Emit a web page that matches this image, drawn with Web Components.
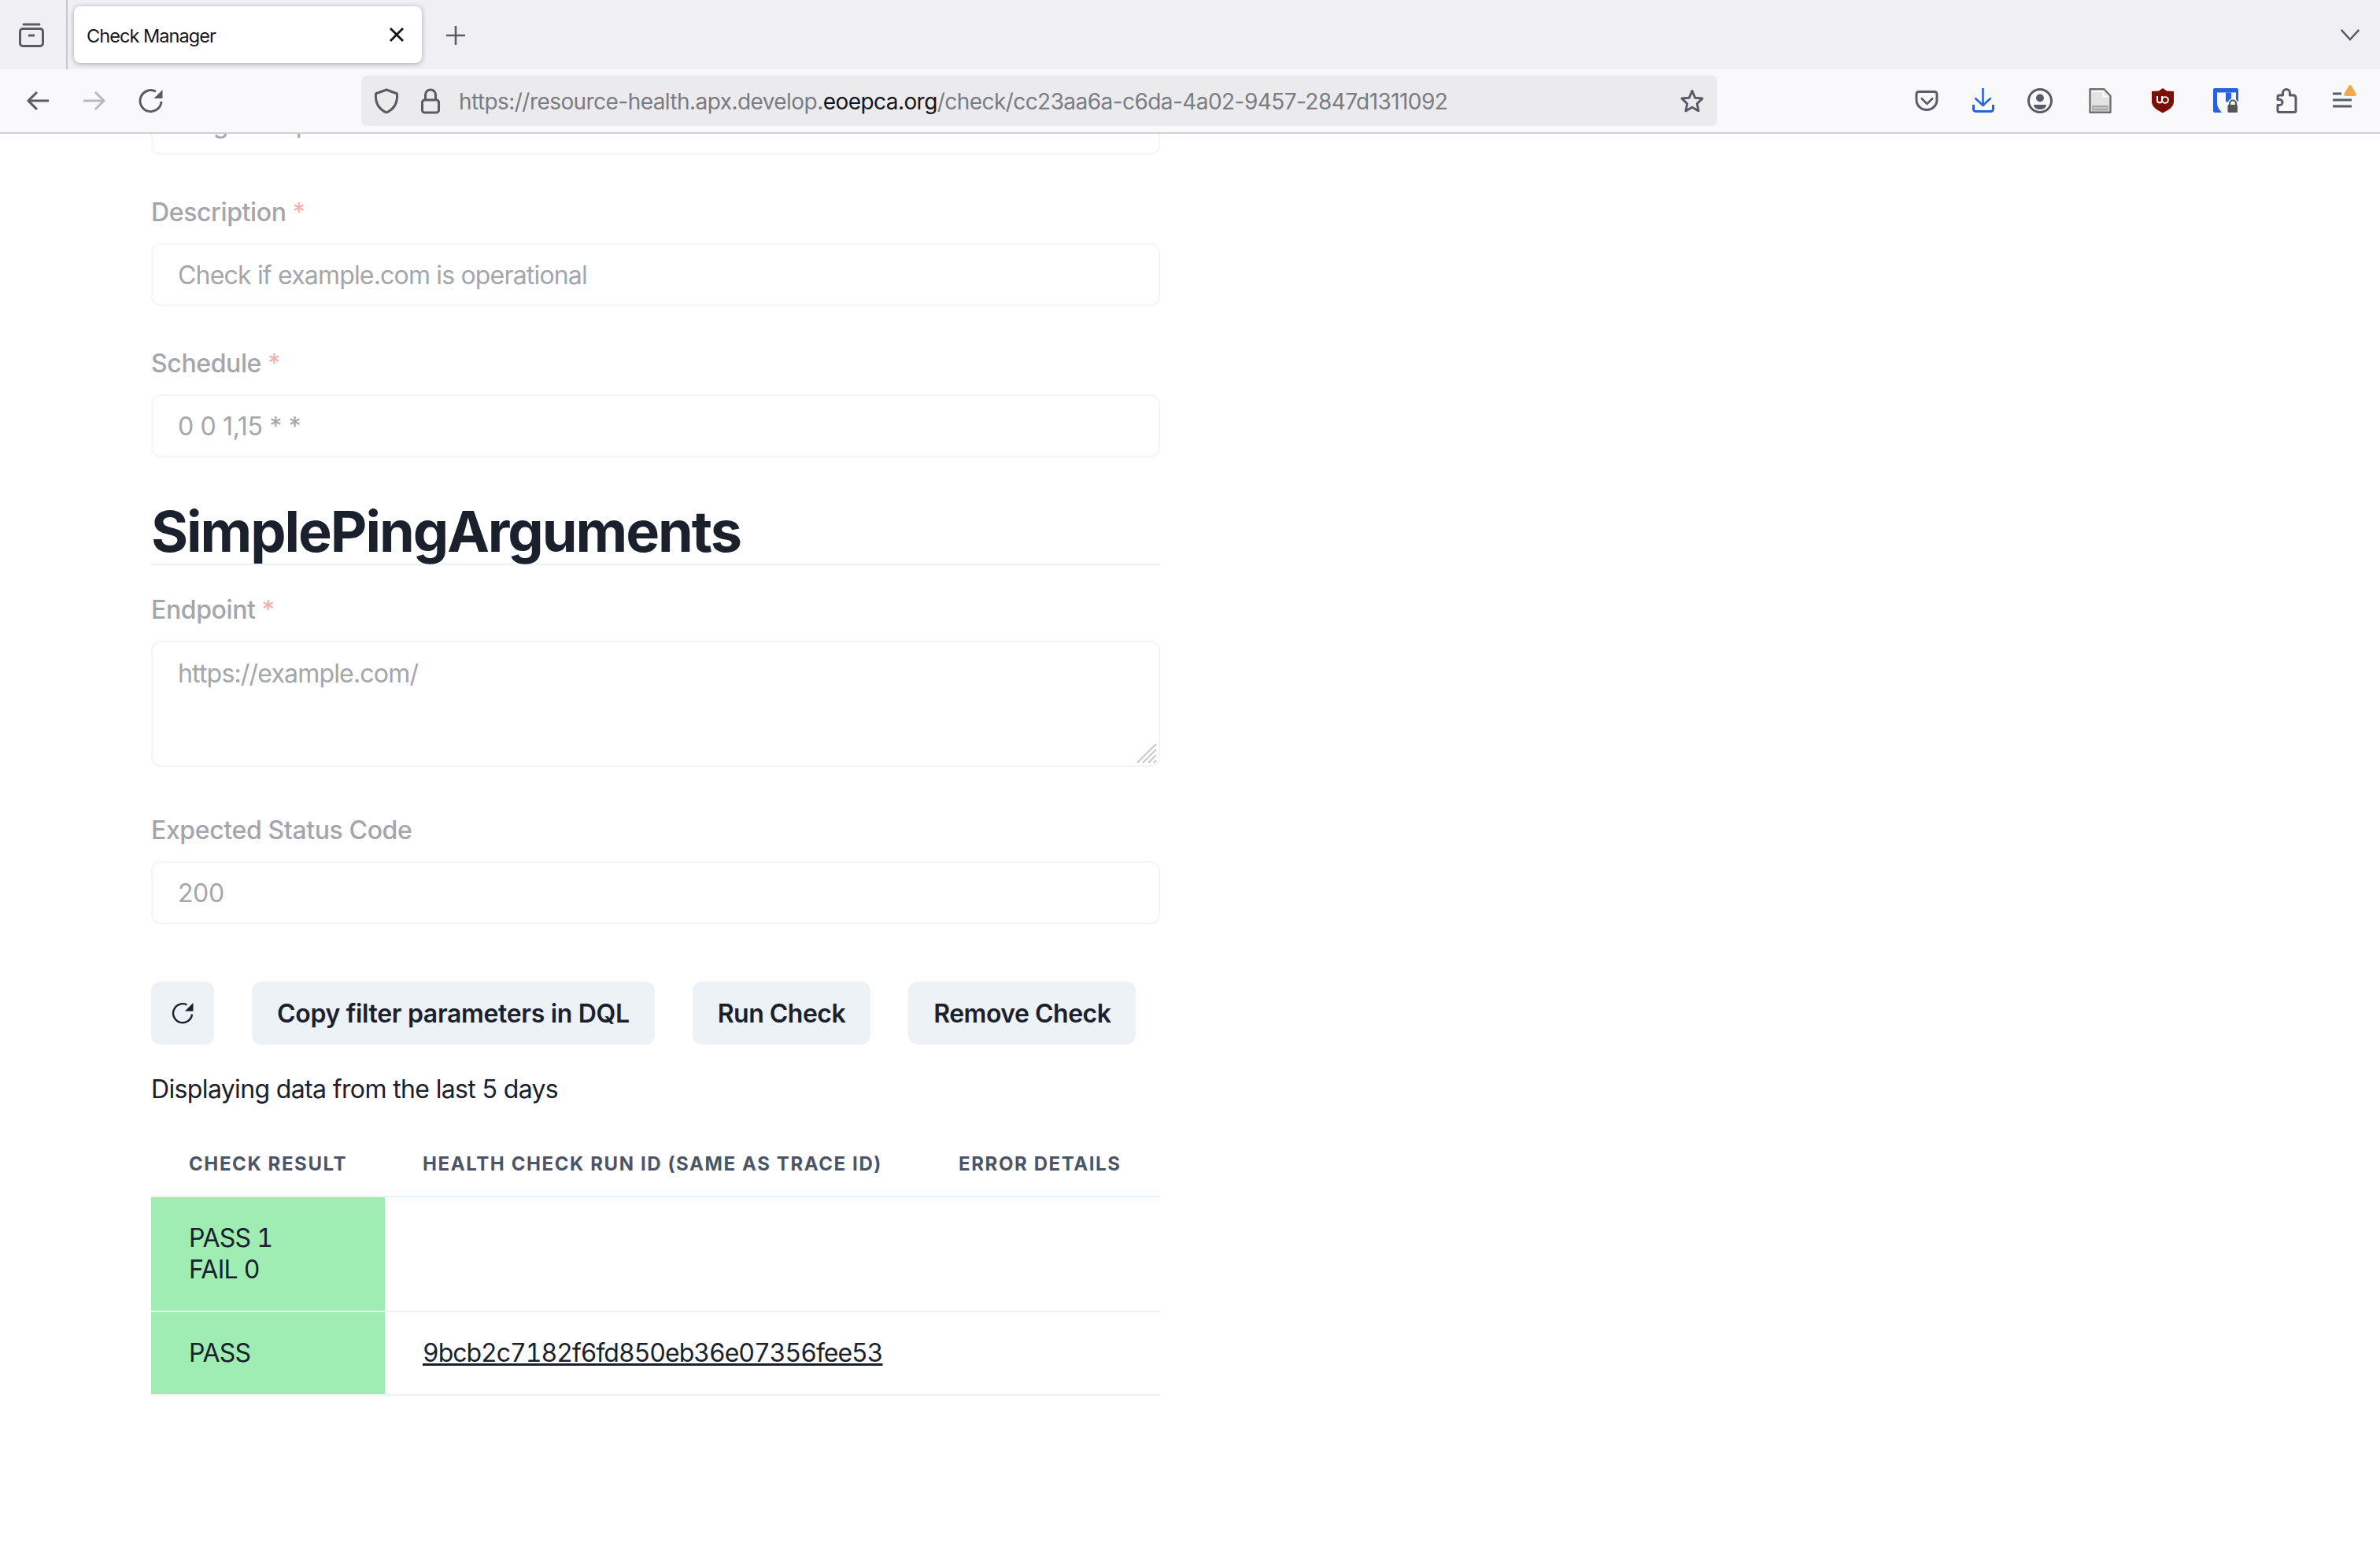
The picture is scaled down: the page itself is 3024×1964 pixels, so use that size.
<!DOCTYPE html>
<html lang="en"><head><meta charset="utf-8"><title>Check Manager</title>
<style>
html,body{margin:0;padding:0;height:100%;overflow:hidden;background:#fff;font-family:Inter,"Liberation Sans",sans-serif;color:#1A202C}
check-page{height:1964px}
</style></head>
<body>
<check-page>
  <browser-tabstrip slot="chrome" title-text="Check Manager"></browser-tabstrip>
  <browser-toolbar slot="chrome"></browser-toolbar>
  <check-form>
    <form-field value="Ping example.com" label="Name" required></form-field>
    <form-field class="next" label="Description" required value="Check if example.com is operational"></form-field>
    <form-field class="next" label="Schedule" required value="0 0 1,15 * *" style="--vs:-.35px"></form-field>
    <section-heading>SimplePingArguments</section-heading>
    <form-field class="first-in-section" label="Endpoint" required multiline value="https://example.com/"></form-field>
    <form-field class="after-area" label="Expected Status Code" value="200" style="--vs:-.4px"></form-field>
    <action-row>
      <action-button square><ui-icon name="reload-small" size="32"></ui-icon></action-button>
      <action-button style="--ls:-.33px">Copy filter parameters in DQL</action-button>
      <action-button style="--ls:-.5px">Run Check</action-button>
      <action-button style="--ls:-.5px">Remove Check</action-button>
    </action-row>
    <range-note>Displaying data from the last 5 days</range-note>
    <results-table></results-table>
  </check-form>
</check-page>
<script>
const G='#5B5B66';
const ICONS={
 tabs:`<path d="M6 3.5h20" stroke="${G}" stroke-width="3" stroke-linecap="round" fill="none" transform="translate(0,-.5)"/><rect x="1.5" y="8.5" width="29" height="22" rx="3.5" stroke="${G}" stroke-width="3" fill="none"/><path d="M12 17h8" stroke="${G}" stroke-width="3" fill="none"/>`,
 close:`<path d="M8 8 24 24M24 8 8 24" stroke="#15141A" stroke-width="2.8" fill="none"/>`,
 plus:`<path d="M16 4v24M4 16h24" stroke="${G}" stroke-width="2.6" fill="none"/>`,
 chevron:`<path d="M4 9.5 16 22.5 28 9.5" stroke="${G}" stroke-width="2.6" fill="none"/>`,
 back:`<path d="M30 16H5M15 5 4 16l11 11" stroke="${G}" stroke-width="3" fill="none"/>`,
 forward:`<path d="M2 16h25M17 5l11 11-11 11" stroke="#B9B9BE" stroke-width="3" fill="none"/>`,
 reload:`<path d="M29 17A13.5 13.5 0 1 1 22 4.3" stroke="${G}" stroke-width="3" fill="none"/><path d="M30.5 2v11h-11z" fill="${G}"/>`,
 'reload-small':`<path d="M28 17.5A12 12 0 1 1 21.5 5.5" stroke="#1A202C" stroke-width="2.4" fill="none"/><path d="M29.5 3v10.5H19z" fill="#1A202C"/>`,
 shield:`<path d="M16 2 29.5 7c.9 11-3.500 19.500-13.500 24C6 26.500 1.600 18 2.500 7z" stroke="${G}" stroke-width="3" stroke-linejoin="round" fill="none"/>`,
 lock:`<rect x="5.500" y="15" width="21" height="16" rx="3" stroke="${G}" stroke-width="3" fill="none"/><path d="M9.500 15V8.500a6.500 6.500 0 0 1 13 0V15" stroke="${G}" stroke-width="3" fill="none"/>`,
 star:`<path d="M16 3.500l3.700 8.700 9.300.9-6.700 6.600 1.800 9.200L16 24.300 7.900 29l1.800-9.200L3 13.100l9.300-.9z" stroke="${G}" stroke-width="3" stroke-linejoin="round" fill="none"/>`,
 pocket:`<path d="M6 4.500h20a3 3 0 0 1 3 3V15c0 7-6 12.500-13 12.500S3 22 3 15V7.500a3 3 0 0 1 3-3z" stroke="${G}" stroke-width="3" fill="none"/><path d="M9 12.500l7.500 7.500 7.500-7.500" stroke="${G}" stroke-width="2.600" fill="none"/>`,
 download:`<path d="M15.500 0v21M5.500 12.500l10 9.500 10-9.500" stroke="#2B62DC" stroke-width="2.600" fill="none"/><path d="M3.500 21v5.500a3 3 0 0 0 3 3h19a3 3 0 0 0 3-3V21" stroke="#2B62DC" stroke-width="3" fill="none"/>`,
 account:`<circle cx="16" cy="16" r="14.500" stroke="${G}" stroke-width="3" fill="none"/><circle cx="16" cy="12.500" r="5" fill="${G}"/><path d="M8 21h16c0 4-4 6-8 6s-8-2-8-6z" fill="${G}"/>`,
 page:`<path d="M3.500 1.200h18l8 8.500v21H3.500z" fill="#E3E3E3" stroke="#707070" stroke-width="2.400" stroke-linejoin="round"/><path d="M6 4h14.500v6.500H27" fill="none" stroke="#fff" stroke-width="2"/><rect x="6" y="22" width="21" height="6.500" fill="#A8A8A8"/><path d="M7 25.200h19" stroke="#CFCFCF" stroke-width="1.500"/>`,
 ublock:`<path d="M16 0 21 3.500 30 4v14c-1 7-8 10.500-14 13.500C10 28.500 3 25 2 18V4l9-.5z" fill="#7A0F07"/><path d="M9 10v5.500a3 3 0 0 0 6 0V10" stroke="#fff" stroke-width="1.900" fill="none"/><circle cx="19" cy="15" r="3.900" stroke="#fff" stroke-width="1.900" fill="none"/>`,
 vault:`<path d="M2 0h28a2 2 0 0 1 2 2v29H2a2 2 0 0 1-2-2V2a2 2 0 0 1 2-2z" fill="#2B62DC"/><path d="M5 5.500H29V17h3v14.500H12C8 28 5 24 5 18z" fill="#F9F9FB"/><rect x="16" y="5.500" width="7" height="12" fill="#2B62DC"/><path d="M21 21.500v-2a4 4 0 0 1 8 0v2" stroke="#F9F9FB" stroke-width="5" fill="none"/><path d="M21 21.500v-2a4 4 0 0 1 8 0v2" stroke="#555" stroke-width="2.200" fill="none"/><rect x="18.500" y="21" width="12.500" height="10" rx="1.500" fill="#555"/>`,
 puzzle:`<path d="M6 30.500a2 2 0 0 1-2-2V21.500h2.500a3.500 3.500 0 0 0 0-7H4V11a2 2 0 0 1 2-2h4.500V6a4.500 4.500 0 0 1 9 0v3H24a3 3 0 0 1 3 3v16.500a2 2 0 0 1-2 2z" stroke="${G}" stroke-width="3" stroke-linejoin="round" fill="none"/>`,
 menu:`<path d="M3 7h11M3 15h24M3 23h24" stroke="${G}" stroke-width="3" fill="none"/><path d="M25 -4c1 0 1.700.7 2.200 1.800L32.500 7c.8 1.700 0 3-2 3h-11c-2 0-2.800-1.300-2-3l5.300-9.200C23.300-3.300 24-4 25-4z" fill="#F4A74B"/>`
};
function make(name,css,html){
  customElements.define(name,class extends HTMLElement{
    connectedCallback(){
      if(this.shadowRoot)return;
      const r=this.attachShadow({mode:'open'});
      const h=typeof html==='function'?html(this):html;
      r.innerHTML=`<style>${css}</style>${h}`;
    }
  });
}
make('ui-icon',`:host{display:inline-flex;flex:none;line-height:0}svg{display:block;overflow:visible}`,
  el=>{const s=el.getAttribute('size')||32;return `<svg width="${s}" height="${s}" viewBox="0 0 32 32" aria-hidden="true">${ICONS[el.getAttribute('name')]}</svg>`});
make('check-page',`:host{display:flex;flex-direction:column;width:3024px;height:1964px;overflow:hidden;background:#fff}
  .chrome{flex:none;position:relative;z-index:1}
  main{flex:1;min-height:0;overflow:hidden;padding-left:192px}`,
  `<div class="chrome"><slot name="chrome"></slot></div><main><slot></slot></main>`);
make('browser-tabstrip',`:host{display:flex;align-items:center;height:88px;background:#F0F0F4;font-family:Inter,sans-serif}
  .mgr{margin-left:24px}
  .div{width:2px;height:88px;background:#C6C6CC;margin-left:28px;margin-right:8px}
  .tab{display:flex;align-items:center;width:442px;height:72px;box-sizing:border-box;background:#fff;border-radius:8px;box-shadow:0 1px 6px rgba(0,0,0,.32);padding-left:16px;font-size:23.5px;color:#15141A;letter-spacing:-.95px}
  .t{flex:1;padding-top:3px}
  .x{margin-right:16px}
  .plus{margin-left:27px;margin-top:2px}
  .end{margin-left:auto;margin-right:23px;margin-top:-1px}`,
  el=>`<ui-icon class="mgr" name="tabs"></ui-icon><div class="div"></div>
  <div class="tab"><span class="t">${el.getAttribute('title-text')}</span><ui-icon class="x" name="close"></ui-icon></div>
  <ui-icon class="plus" name="plus"></ui-icon><ui-icon class="end" name="chevron" size="30"></ui-icon>`);
make('browser-toolbar',`:host{display:flex;align-items:center;height:80px;box-sizing:content-box;background:#F9F9FB;border-bottom:2px solid #CFCFD8;margin-bottom:-2px;font-family:Inter,sans-serif}
  ui-icon{margin-left:var(--m)}
  .url{display:flex;align-items:center;width:1723px;height:64px;margin-left:251px;background:#EBEBED;border-radius:8px;flex:none;box-sizing:border-box}
  .url .addr{margin-left:20px;padding-top:2px;font-size:28px;color:#7B7B83;white-space:nowrap;letter-spacing:-.56px}
  .url b{font-weight:400;color:#15141A}
  .shield{margin-left:16px}.lock{margin-left:24px}.star{margin-left:auto;margin-right:16px}`,
  `<ui-icon name="back" style="--m:32px"></ui-icon><ui-icon name="forward" style="--m:40px"></ui-icon><ui-icon name="reload" style="--m:40px"></ui-icon>
  <div class="url"><ui-icon class="shield" name="shield"></ui-icon><ui-icon class="lock" name="lock"></ui-icon>
  <span class="addr">https://resource-health.apx.develop.<b>eoepca.org</b>/check/cc23aa6a-c6da-4a02-9457-2847d1311092</span>
  <ui-icon class="star" name="star"></ui-icon></div>
  <ui-icon name="pocket" style="--m:250px"></ui-icon><ui-icon name="download" style="--m:40px"></ui-icon><ui-icon name="account" style="--m:40px"></ui-icon><ui-icon name="page" style="--m:44px"></ui-icon><ui-icon name="ublock" style="--m:48px"></ui-icon><ui-icon name="vault" style="--m:48px"></ui-icon><ui-icon name="puzzle" style="--m:46px"></ui-icon><ui-icon name="menu" style="--m:39px"></ui-icon>`);
make('check-form',`:host{display:block;width:1282px;margin-top:-115px;font-family:Inter,sans-serif}`,`<slot></slot>`);
make('form-field',`:host{display:block;margin-top:0;color:#A3A6AB}
  :host(.next){margin-top:48px}
  :host(.first-in-section){margin-top:32px}
  :host(.after-area){margin-top:56px}
  .label{font-size:32px;line-height:50px;font-weight:500;margin-bottom:16px;height:48px;letter-spacing:-.38px}
  .req{color:#F5B2B2;margin-left:8px}
  .box{position:relative;box-sizing:border-box;height:80px;border:2px solid #F3F5F8;border-radius:12px;padding:0 32px;font-size:32px;line-height:78px;white-space:nowrap;letter-spacing:var(--vs,-.82px)}
  .box.multi{height:160px;line-height:48px;padding-top:16px}
  svg{position:absolute;right:2px;bottom:2px}`,
  el=>{
    const multi=el.hasAttribute('multiline');
    const grip=multi?`<svg width="26" height="26" viewBox="0 0 26 26"><path d="M1 25 25 1M8 25 25 8M15 25 25 15M22 25l3-3" stroke="#C9C9C9" stroke-width="2" fill="none"/></svg>`:'';
    return `<div class="label">${el.getAttribute('label')}${el.hasAttribute('required')?'<span class="req">*</span>':''}</div>
    <div class="box${multi?' multi':''}">${el.getAttribute('value')}${grip}</div>`;
  });
make('section-heading',`:host{display:block;margin-top:55px;padding-bottom:2px;font-size:72px;line-height:78px;font-weight:700;color:#1A202C;border-bottom:2px solid #EDF2F7;letter-spacing:-2.05px}`,`<slot></slot>`);
make('action-row',`:host{display:flex;gap:48px;margin-top:73px}`,`<slot></slot>`);
make('action-button',`:host{display:inline-flex;align-items:center;justify-content:center;height:80px;padding:0 32px;background:#EDF2F7;border-radius:12px;font-size:32px;font-weight:600;color:#1A202C;white-space:nowrap;letter-spacing:var(--ls,-.4px)}
  :host([square]){width:80px;padding:0;box-sizing:border-box}`,`<slot></slot>`);
make('range-note',`:host{display:block;margin-top:33px;font-size:32px;line-height:48px;color:#1A202C;letter-spacing:-.64px}`,`<slot></slot>`);
make('results-table',`:host{display:block;margin-top:31px;font-family:Inter,sans-serif}
  table{width:1282px;border-collapse:separate;border-spacing:0;table-layout:fixed}
  th{height:80px;padding:0 48px;box-sizing:content-box;text-align:left;font-size:24px;line-height:32px;font-weight:700;letter-spacing:1.6px;color:#4A5568;text-transform:uppercase;border-bottom:2px solid #EDF2F7;white-space:nowrap}
  td{padding:32px 48px;font-size:32px;line-height:40px;color:#1A202C;border-bottom:2px solid #EDF2F7;vertical-align:middle;font-variant-numeric:tabular-nums}
  td.ok{background:#9FEDB2;letter-spacing:-.7px}
  a{color:inherit;text-decoration:underline;letter-spacing:-1.03px}`,
  `<table><colgroup><col style="width:297px"><col style="width:681px"><col style="width:304px"></colgroup>
  <thead><tr><th>Check Result</th><th>Health Check Run ID (same as Trace ID)</th><th>Error Details</th></tr></thead>
  <tbody><tr><td class="ok">PASS 1<br>FAIL 0</td><td></td><td></td></tr>
  <tr><td class="ok">PASS</td><td><a href="#">9bcb2c7182f6fd850eb36e07356fee53</a></td><td></td></tr></tbody></table>`);
</script>
</body></html>
